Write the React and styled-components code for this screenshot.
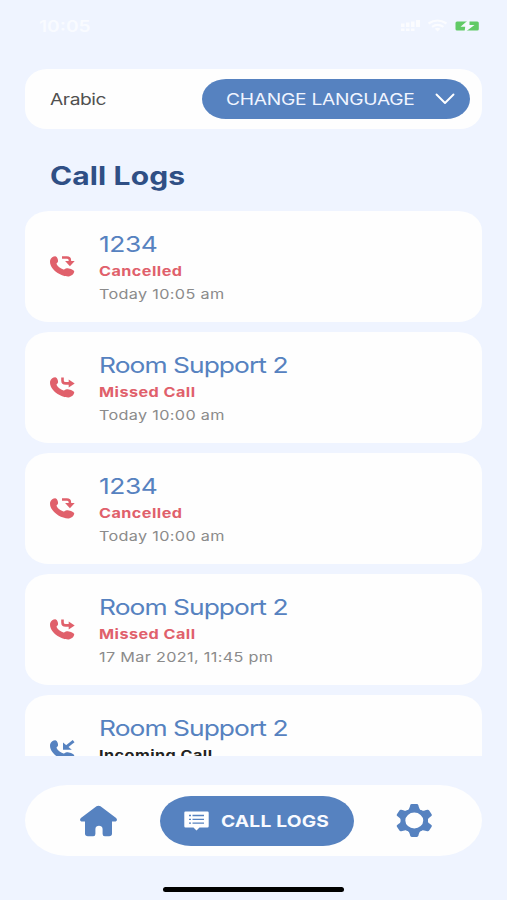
import React from 'react';
import styled, { createGlobalStyle } from 'styled-components';

const calls = [
  { id: 1, name: '1234', type: 'cancelled', time: 'Today 10:05 am' },
  { id: 2, name: 'Room Support 2', type: 'missed', time: 'Today 10:00 am' },
  { id: 3, name: '1234', type: 'cancelled', time: 'Today 10:00 am' },
  { id: 4, name: 'Room Support 2', type: 'missed', time: '17 Mar 2021, 11:45 pm' },
  { id: 5, name: 'Room Support 2', type: 'incoming' },
];

const callTypes = {
  cancelled: { label: 'Cancelled', color: '#e0606b', icon: '#e0606b' },
  missed: { label: 'Missed Call', color: '#e0606b', icon: '#e0606b' },
  incoming: { label: 'Incoming Call', color: '#222', icon: '#5682c0' },
};

const CallIcon = ({ type }) => (
  <PhoneSvg viewBox="0 0 25 21" color={callTypes[type].icon}>
    <path
      fill="currentColor"
      d="M.2 4C1 1.600 3.800 0 5.800.4 7.300.8 8.300 3.800 8 5.500 7.800 6.900 6.200 7 6.600 8.100c1 2.400 3.800 4.500 6.900 5.300 1.300.3 1.800-1 3.200-1.100 2.300-.1 6.400 1.300 7.400 2.600.7 1.900-2.300 5.400-5.500 5.500C10.500 20.700-1.600 12.400.2 4z"
    />
    {type === 'cancelled' && (
      <>
        <path d="M12 1.500h4.800q3.100 0 3.100 2.700V6" fill="none" stroke="currentColor" strokeWidth="2.500" />
        <path d="M15.100 5h9.600l-4.800 5.200z" fill="currentColor" />
      </>
    )}
    {type === 'missed' && (
      <>
        <path d="M12.500.5v2.900q0 3 3.100 3H20" fill="none" stroke="currentColor" strokeWidth="2.600" />
        <path d="M18.700 2.500l6 3.900-6 4.100z" fill="currentColor" />
      </>
    )}
    {type === 'incoming' && (
      <>
        <path d="M23.600 1.200L16 7.200" fill="none" stroke="currentColor" strokeWidth="2.900" />
        <path d="M13 2.500v7.300h8.800z" fill="currentColor" />
        <path d="M15 14.800q3-3.200 8.200 0z" fill="currentColor" />
      </>
    )}
  </PhoneSvg>
);

const StatusIcons = () => (
  <svg width="82" height="16" viewBox="0 0 82 16">
    <g fill="#fff" opacity=".75">
      <rect x="1" y="5.500" width="3.500" height="3.500" />
      <rect x="6" y="4.500" width="3.500" height="4.500" />
      <rect x="11" y="3.500" width="3.500" height="5.500" />
      <rect x="16" y="2" width="4" height="7" />
      <rect x="1" y="10.500" width="3.500" height="2.500" />
      <rect x="6" y="10.500" width="3.500" height="2.500" />
      <rect x="11" y="10.500" width="3.500" height="2.500" />
    </g>
    <g fill="none" stroke="#fff" strokeWidth="2.200" opacity=".75">
      <path d="M28.500 5.500q9-6 18 0" />
      <path d="M32 8.800q5.500-4 11.500 0" />
    </g>
    <path d="M34.800 10.700q2.800-2 5.600 0L37.600 13.500z" fill="#fff" opacity=".75" />
    <rect x="55.500" y="3.500" width="23.300" height="9" rx="1.500" fill="#61ca66" />
    <path d="M69.500 1L60.500 8.800h4.700L64.500 14.500l10-7.600h-5z" fill="#f5f9ff" />
  </svg>
);

const HomeIcon = () => (
  <svg width="38" height="32" viewBox="0 0 38 32">
    <path
      fill="#5682c0"
      d="M16.500 1.200q2-1.100 4 0l15.600 11.700c1.700 1.600.7 3.700-1.400 3.700h-2.700v12q0 2.700-2.900 2.700h-4.300q-2.200 0-2.200-2.200v-5.200c0-4.300-7.200-4.300-7.200 0v5.200q0 2.200-2.200 2.200H7.900q-2.900 0-2.900-2.700v-12H2.300C.2 16.600-.8 14.500.9 12.900z"
    />
  </svg>
);

const GearIcon = () => (
  <svg width="38" height="34" viewBox="-17 -16.500 33.500 34" preserveAspectRatio="none">
    <g fill="#5682c0">
      {[0, 60, 120, 180, 240, 300].map((angle) => (
        <path
          key={angle}
          transform={`rotate(${angle})`}
          d="M-7-9.500Q-4.300-10.500-4-13.500L-3.600-15.300Q-3.400-16.400-2.200-16.400H2.200Q3.400-16.400 3.600-15.300L4-13.500Q4.300-10.500 7-9.500z"
        />
      ))}
    </g>
    <circle r="10" fill="none" stroke="#5682c0" strokeWidth="4.200" />
  </svg>
);

const LogIcon = () => (
  <svg width="25" height="20" viewBox="0 0 25 20">
    <path fill="#fff" d="M1.500.5h22q1.200 0 1.200 1.200v13.600q0 1.200-1.200 1.200h-8L12.500 19.500l-3-3h-8Q.3 16.500.3 15.300V1.700Q.3.500 1.500.5z" />
    <g stroke="#5682c0" strokeWidth="1.300">
      <path d="M5 4.500h2M8.500 4.500H20M5 8.300h2M8.500 8.300H20M5 12.100h2M8.500 12.100H20" />
    </g>
  </svg>
);

const Chevron = () => (
  <svg width="20" height="12" viewBox="0 0 20 12">
    <path d="M1.500 1.500L10 10l8.500-8.500" fill="none" stroke="#fff" strokeWidth="1.900" strokeLinecap="round" strokeLinejoin="round" />
  </svg>
);

export default function App() {
  return (
    <Screen>
      <GlobalStyle />
      <StatusBar>
        <Clock>10:05</Clock>
        <StatusIcons />
      </StatusBar>
      <LanguageBar>
        <Language>Arabic</Language>
        <LanguageButton>
          <ButtonText>CHANGE LANGUAGE</ButtonText>
          <Chevron />
        </LanguageButton>
      </LanguageBar>
      <Title>Call Logs</Title>
      <CallList>
        {calls.map((call) => (
          <CallCard key={call.id}>
            <CallIcon type={call.type} />
            <CallDetails>
              <CallName $numeric={/^\d+$/.test(call.name)}>{call.name}</CallName>
              <CallStatus color={callTypes[call.type].color}>{callTypes[call.type].label}</CallStatus>
              {call.time && <CallTime>{call.time}</CallTime>}
            </CallDetails>
          </CallCard>
        ))}
      </CallList>
      <NavBar>
        <HomeIcon />
        <ActiveTab>
          <LogIcon />
          <TabText>CALL LOGS</TabText>
        </ActiveTab>
        <GearIcon />
      </NavBar>
      <HomeIndicator />
    </Screen>
  );
}

const GlobalStyle = createGlobalStyle`
  * {
    box-sizing: border-box;
  }

  body {
    margin: 0;
    background: #eff4ff;
    font-family: Inter, "Liberation Sans", sans-serif;
  }

  svg {
    display: block;
    flex-shrink: 0;
  }
`;

const Screen = styled.div`
  display: flex;
  flex-direction: column;
  width: 507px;
  height: 900px;
  padding: 0 25px;
  overflow: hidden;
  background: #eff4ff;
`;

const StatusBar = styled.header`
  display: flex;
  align-items: flex-start;
  justify-content: space-between;
  height: 69px;
  padding: 18px 0 0 14px;
`;

/* the type is set wide everywhere on this screen */
const WideText = styled.span`
  display: block;
  white-space: nowrap;
  transform: scaleX(1.2);
  transform-origin: left center;
`;

const Clock = styled(WideText)`
  font-size: 16px;
  line-height: 16px;
  font-weight: 600;
  color: #f9fbff;
`;

const LanguageBar = styled.section`
  display: flex;
  flex-shrink: 0;
  align-items: center;
  justify-content: space-between;
  height: 60px;
  padding: 0 12px 0 25px;
  border-radius: 22px / 20px;
  background: #fefefe;
`;

const Language = styled(WideText)`
  font-size: 16px;
  letter-spacing: -.35px;
  color: #505050;
`;

const LanguageButton = styled.button`
  display: flex;
  align-items: center;
  justify-content: space-between;
  width: 268px;
  height: 40px;
  padding: 0 15px 0 24px;
  border: 0;
  border-radius: 24px / 20px;
  background: #5682c0;
  font-family: inherit;
`;

const ButtonText = styled(WideText)`
  font-size: 16px;
  letter-spacing: -.22px;
  color: #f0f5ff;
`;

const Title = styled.h1`
  flex-shrink: 0;
  margin: 32px 0 19px 25px;
  font-size: 25px;
  line-height: 30px;
  font-weight: 700;
  letter-spacing: .1px;
  white-space: nowrap;
  transform: scaleX(1.2);
  transform-origin: left center;
  color: #2f4f85;
`;

const CallList = styled.main`
  display: flex;
  flex-direction: column;
  flex-shrink: 0;
  gap: 10px;
  height: 545px;
  margin-top: 1px;
  overflow: hidden;
`;

const CallCard = styled.article`
  display: flex;
  flex-shrink: 0;
  height: 111px;
  padding: 0 25px;
  border-radius: 24px / 20px;
  background: #fefefe;
`;

const PhoneSvg = styled.svg`
  width: 25px;
  height: 21px;
  margin-top: 45px;
  color: ${({ color }) => color};
`;

const CallDetails = styled.div`
  padding: 19px 0 0 24px;
`;

const CallName = styled(WideText)`
  font-size: 22px;
  line-height: 28px;
  letter-spacing: ${({ $numeric }) => ($numeric ? '-.4px' : '-.8px')};
  color: #5682c0;
`;

const CallStatus = styled(WideText)`
  margin-top: 2px;
  font-size: 13.5px;
  line-height: 22px;
  font-weight: 700;
  letter-spacing: .38px;
  color: ${({ color }) => color};
`;

const CallTime = styled(WideText)`
  margin-top: 1px;
  font-size: 13.5px;
  line-height: 22px;
  letter-spacing: .28px;
  color: #8b8b8b;
`;

const NavBar = styled.nav`
  display: flex;
  flex-shrink: 0;
  align-items: center;
  justify-content: space-between;
  height: 71px;
  margin-top: 29px;
  padding: 0 49px 0 55px;
  border-radius: 43px / 36px;
  background: #fefefe;
`;

const ActiveTab = styled.div`
  display: flex;
  align-items: center;
  gap: 12px;
  width: 194px;
  height: 50px;
  padding-left: 24px;
  border-radius: 31px / 25px;
  background: #5682c0;
`;

const TabText = styled(WideText)`
  font-size: 16px;
  font-weight: 700;
  letter-spacing: .15px;
  color: #f8faff;
`;

const HomeIndicator = styled.div`
  flex-shrink: 0;
  align-self: center;
  width: 181px;
  height: 5px;
  margin-top: 31px;
  border-radius: 3px;
  background: #000;
`;
